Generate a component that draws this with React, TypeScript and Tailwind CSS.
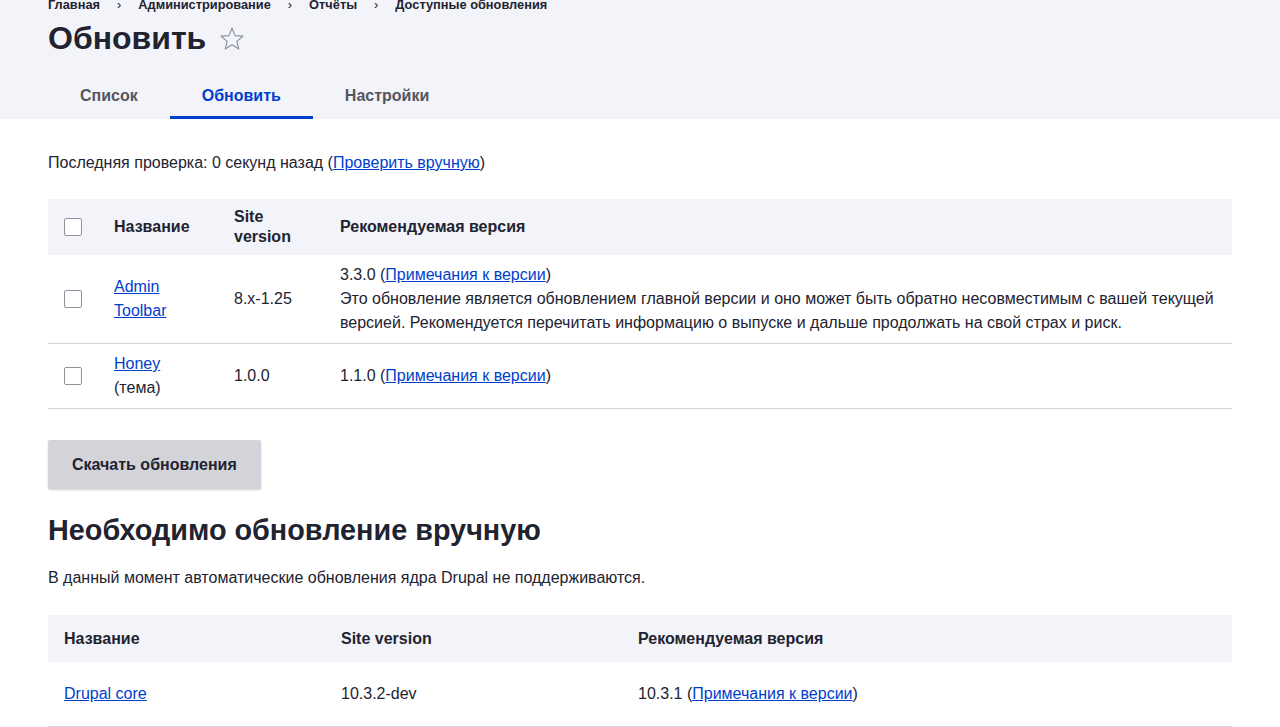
import React from "react";

const font = { fontFamily: '"Liberation Sans", Arial, sans-serif' };

function Check() {
  return (
    <span className="block w-[18px] h-[18px] rounded-[2px] border border-[#8e929c] bg-white" />
  );
}

function Notes() {
  return (
    <>
      (<a href="#" className="text-[#003ecc] underline">Примечания к версии</a>)
    </>
  );
}

export default function App() {
  return (
    <div className="min-h-[727px] bg-white text-[#222330] text-base leading-6" style={font}>
      <div className="bg-[#f3f4f9] px-12">
        <nav className="flex items-center gap-[17px] text-[12.8px] font-bold leading-4 -mt-[3px] text-[#222330]">
          <span>Главная</span>
          <span className="font-normal">›</span>
          <span>Администрирование</span>
          <span className="font-normal">›</span>
          <span>Отчёты</span>
          <span className="font-normal">›</span>
          <span>Доступные обновления</span>
        </nav>
        <div className="flex items-center gap-3 mt-[5px]">
          <h1 className="text-[32px] font-bold leading-10">Обновить</h1>
          <svg width="28" height="28" viewBox="0 0 24 24" className="mt-[2px]">
            <path
              d="M12 2.8l2.6 6.3 6.8.5-5.2 4.4 1.6 6.6L12 17l-5.8 3.6 1.6-6.6-5.2-4.4 6.8-.5z"
              fill="none"
              stroke="#8e929c"
              strokeWidth="1"
              strokeLinejoin="round"
            />
          </svg>
        </div>
        <div className="flex mt-[18px]">
          <a className="px-8 pt-[8px] pb-[11px] font-bold text-[#545560]">Список</a>
          <a className="px-8 pt-[8px] pb-[8px] font-bold text-[#003ecc] border-b-[3px] border-[#003ecc]">Обновить</a>
          <a className="px-8 pt-[8px] pb-[11px] font-bold text-[#545560]">Настройки</a>
        </div>
      </div>

      <div className="px-12">
        <p className="mt-[32px]">
          Последняя проверка: 0 секунд назад (<a href="#" className="text-[#003ecc] underline">Проверить вручную</a>)
        </p>

        <table className="w-full mt-[24px] border-collapse">
          <thead>
            <tr className="bg-[#f3f4f9] text-left font-bold">
              <th className="w-[50px] px-4 py-2"><Check /></th>
              <th className="w-[120px] px-4 py-2">Название</th>
              <th className="w-[106px] px-4 py-2 leading-5">Site version</th>
              <th className="px-4 py-2">Рекомендуемая версия</th>
            </tr>
          </thead>
          <tbody>
            <tr className="border-b border-[#d3d4d9] align-middle">
              <td className="px-4 py-2"><Check /></td>
              <td className="px-4 py-2">
                <a href="#" className="text-[#003ecc] underline">Admin Toolbar</a>
              </td>
              <td className="px-4 py-2">8.x-1.25</td>
              <td className="px-4 py-2">
                <div>3.3.0 <Notes /></div>
                <div>
                  Это обновление является обновлением главной версии и оно может быть обратно несовместимым с вашей текущей версией. Рекомендуется перечитать информацию о выпуске и дальше продолжать на свой страх и риск.
                </div>
              </td>
            </tr>
            <tr className="border-b border-[#d3d4d9]">
              <td className="px-4 py-2"><Check /></td>
              <td className="px-4 py-2">
                <a href="#" className="text-[#003ecc] underline">Honey</a>
                <div>(тема)</div>
              </td>
              <td className="px-4 py-2">1.0.0</td>
              <td className="px-4 py-2">1.1.0 <Notes /></td>
            </tr>
          </tbody>
        </table>

        <button className="mt-[31px] h-[49px] px-6 rounded-[2px] bg-[#d3d4d9] font-bold text-[#222330] shadow-[0_1px_2px_rgba(0,0,0,0.2)]">
          Скачать обновления
        </button>

        <h2 className="mt-[23px] text-[28.8px] font-bold leading-9">Необходимо обновление вручную</h2>
        <p className="mt-[18px]">В данный момент автоматические обновления ядра Drupal не поддерживаются.</p>

        <table className="w-full mt-[25px] border-collapse">
          <thead>
            <tr className="bg-[#f3f4f9] text-left font-bold">
              <th className="w-[277px] px-4 h-[47px]">Название</th>
              <th className="w-[297px] px-4 h-[47px]">Site version</th>
              <th className="px-4 h-[47px]">Рекомендуемая версия</th>
            </tr>
          </thead>
          <tbody>
            <tr className="border-b border-[#d3d4d9]">
              <td className="px-4 h-[64px]">
                <a href="#" className="text-[#003ecc] underline">Drupal core</a>
              </td>
              <td className="px-4 h-[64px]">10.3.2-dev</td>
              <td className="px-4 h-[64px]">10.3.1 <Notes /></td>
            </tr>
          </tbody>
        </table>
      </div>
    </div>
  );
}
